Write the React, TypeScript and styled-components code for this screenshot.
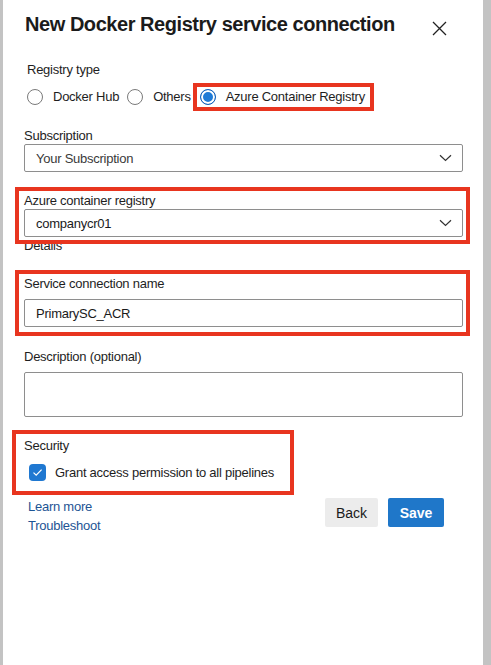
import React from "react";
import styled, { createGlobalStyle } from "styled-components";

const GlobalStyle = createGlobalStyle`
  html, body { margin: 0; padding: 0; background: #c3c3c3; }
  body { font-family: "Liberation Sans", Arial, sans-serif; color: #1e1e1e; }
  * { box-sizing: border-box; }
`;

const Frame = styled.div`
  width: 480px;
  height: 665px;
  margin-left: 3px;
  background: #fff;
  padding: 12px 20px 0 21px;
  display: flex;
  flex-direction: column;
  overflow: hidden;
  letter-spacing: -0.25px;
`;

const Header = styled.div`
  display: flex;
  justify-content: space-between;
  align-items: flex-start;
  height: 24px;
`;

const Title = styled.h1`
  margin: 0 0 0 1px;
  font-size: 20px;
  line-height: 24px;
  font-weight: 700;
  letter-spacing: -0.45px;
  color: #1b1b1b;
`;

const CloseButton = styled.button`
  border: none;
  background: none;
  padding: 0;
  margin: 9px 16px 0 0;
  width: 15px;
  height: 15px;
  display: flex;
  color: #222;
`;

const Label = styled.div<{ $mt?: number; $ml?: number }>`
  font-size: 13px;
  line-height: 16px;
  color: #1e1e1e;
  margin-top: ${(p) => p.$mt ?? 0}px;
  margin-left: ${(p) => p.$ml ?? 0}px;
  white-space: nowrap;
`;

const RadioRow = styled.div`
  display: flex;
  align-items: center;
  height: 20px;
  margin-top: 9px;
  padding-left: 3px;
`;

const RadioOption = styled.label<{ $mr?: number }>`
  display: inline-flex;
  align-items: center;
  gap: 10px;
  font-size: 13px;
  line-height: 16px;
  margin-right: ${(p) => p.$mr ?? 0}px;
  white-space: nowrap;
`;

const RadioCircle = styled.span<{ $checked?: boolean }>`
  width: 16px;
  height: 16px;
  border-radius: 50%;
  flex: none;
  border: 1px solid ${(p) => (p.$checked ? "#1560b8" : "#7a7a7a")};
  background: ${(p) => (p.$checked ? "#1f7ad6" : "#fff")};
  box-shadow: ${(p) => (p.$checked ? "inset 0 0 0 2px #fff" : "none")};
`;

const Highlight = styled.div<{ $m: string; $p: string; $inline?: boolean }>`
  position: relative;
  z-index: 1;
  display: ${(p) => (p.$inline ? "inline-flex" : "flex")};
  flex-direction: ${(p) => (p.$inline ? "row" : "column")};
  align-items: ${(p) => (p.$inline ? "center" : "stretch")};
  align-self: ${(p) => (p.$inline ? "auto" : "stretch")};
  border: 4px solid #e8351f;
  margin: ${(p) => p.$m};
  padding: ${(p) => p.$p};
`;

const SecurityBox = styled(Highlight)`
  align-self: flex-start;
`;

const Control = styled.div<{ $h?: number; $mt?: number }>`
  height: ${(p) => p.$h ?? 28}px;
  margin-top: ${(p) => p.$mt ?? 0}px;
  border: 1px solid #8e8e8e;
  border-radius: 2px;
  background: #fff;
  display: flex;
  align-items: center;
  justify-content: space-between;
  padding: 0 10px 0 11px;
  font-size: 13px;
  color: #1e1e1e;
`;

const SelectValue = styled.span<{ $muted?: boolean }>`
  color: ${(p) => (p.$muted ? "#3a3a3a" : "#1a1a1a")};
`;

const CheckRow = styled.div`
  display: flex;
  align-items: center;
  gap: 9px;
  margin-top: 10px;
  margin-left: 5px;
  height: 17px;
  font-size: 13px;
  white-space: nowrap;
`;

const CheckBox = styled.span`
  width: 17px;
  height: 17px;
  border-radius: 4px;
  background: #1f78d1;
  display: flex;
  align-items: center;
  justify-content: center;
  flex: none;
`;

const Footer = styled.div`
  display: flex;
  justify-content: space-between;
  align-items: flex-start;
  margin-top: 2px;
  padding: 0 19px 0 4px;
`;

const Links = styled.div`
  display: flex;
  flex-direction: column;
`;

const Link = styled.a`
  font-size: 13px;
  line-height: 19px;
  color: #1d5494;
  text-decoration: none;
`;

const Buttons = styled.div`
  display: flex;
  gap: 10px;
  margin-top: 1px;
`;

const Button = styled.button<{ $primary?: boolean }>`
  height: 29px;
  width: ${(p) => (p.$primary ? 56 : 53)}px;
  border: none;
  border-radius: 2px;
  font-family: "Liberation Sans", Arial, sans-serif;
  font-size: 14px;
  font-weight: ${(p) => (p.$primary ? 700 : 400)};
  background: ${(p) => (p.$primary ? "#1f77c9" : "#ececec")};
  color: ${(p) => (p.$primary ? "#fff" : "#1a1a1a")};
  padding: 0;
`;

const Chevron = () => (
  <svg width="13" height="8" viewBox="0 0 13 8" fill="none">
    <path d="M1 1.2 L6.5 6.5 L12 1.2" stroke="#333" strokeWidth="1.2" />
  </svg>
);

export default function App() {
  return (
    <>
      <GlobalStyle />
      <Frame>
        <Header>
          <Title>New Docker Registry service connection</Title>
          <CloseButton aria-label="Close">
            <svg width="15" height="15" viewBox="0 0 15 15">
              <path d="M1 1 L14 14 M14 1 L1 14" stroke="#222" strokeWidth="1.3" />
            </svg>
          </CloseButton>
        </Header>

        <Label $mt={26} $ml={3}>Registry type</Label>
        <RadioRow>
          <RadioOption $mr={8}>
            <RadioCircle />
            Docker Hub
          </RadioOption>
          <RadioOption $mr={2}>
            <RadioCircle />
            Others
          </RadioOption>
          <Highlight $inline $m="-6px 0" $p="2px 5px 2px 3px">
            <RadioOption>
              <RadioCircle $checked />
              Azure Container Registry
            </RadioOption>
          </Highlight>
        </RadioRow>

        <Label $mt={21}>Subscription</Label>
        <Control>
          <SelectValue $muted>Your Subscription</SelectValue>
          <Chevron />
        </Control>

        <Highlight $m="15px -7px -7px -9px" $p="2px 3px 3px 5px">
          <Label>Azure container registry</Label>
          <Control>
            <SelectValue>companycr01</SelectValue>
            <Chevron />
          </Control>
        </Highlight>
        <Label $mt={1}>Details</Label>

        <Highlight $m="16px -7px -9px -9px" $p="2px 3px 5px 5px">
          <Label>Service connection name</Label>
          <Control $mt={7}>
            <SelectValue>PrimarySC_ACR</SelectValue>
          </Control>
        </Highlight>

        <Label $mt={22}>Description (optional)</Label>
        <Control $h={45} $mt={7} />

        <SecurityBox $m="13px 0 0 -12px" $p="4px 16px 10px 8px">
          <Label>Security</Label>
          <CheckRow>
            <CheckBox>
              <svg width="11" height="9" viewBox="0 0 11 9" fill="none">
                <path d="M1.5 4.6 L4.2 7.2 L9.6 1.6" stroke="#fff" strokeWidth="1.2" />
              </svg>
            </CheckBox>
            Grant access permission to all pipelines
          </CheckRow>
        </SecurityBox>

        <Footer>
          <Links>
            <Link href="#">Learn more</Link>
            <Link href="#">Troubleshoot</Link>
          </Links>
          <Buttons>
            <Button>Back</Button>
            <Button $primary>Save</Button>
          </Buttons>
        </Footer>
      </Frame>
    </>
  );
}
